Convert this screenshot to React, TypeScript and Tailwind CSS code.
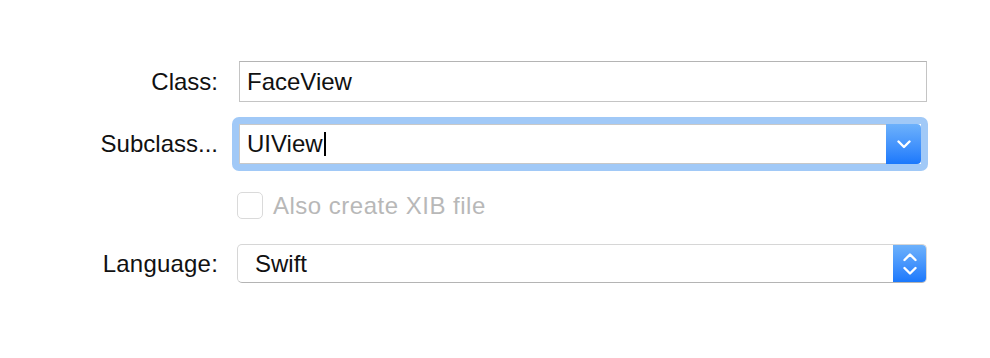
import React from 'react';

function ChevronDown() {
  return (
    <svg width="14" height="9" viewBox="0 0 14 9" fill="none">
      <path d="M1.5 1.5 L7 7 L12.5 1.5" stroke="white" strokeWidth="2.4" strokeLinecap="round" strokeLinejoin="round" />
    </svg>
  );
}

function UpDown() {
  return (
    <svg width="14" height="24" viewBox="0 0 14 24" fill="none">
      <path d="M1.5 8 L7 2.5 L12.5 8" stroke="white" strokeWidth="2.4" strokeLinecap="round" strokeLinejoin="round" />
      <path d="M1.5 16 L7 21.5 L12.5 16" stroke="white" strokeWidth="2.4" strokeLinecap="round" strokeLinejoin="round" />
    </svg>
  );
}

export default function App() {
  return (
    <div className="w-[990px] h-[358px] bg-white pt-[61px] font-['Liberation_Sans',Arial,sans-serif] text-[24px] text-[#111]">
      {/* Class */}
      <div className="flex items-center h-[41px]">
        <div className="w-[218px] text-right">Class:</div>
        <div className="ml-[21px] w-[688px] h-[41px] border border-[#c4c4c4] border-t-[#b4b4b4] flex items-center pl-[7px]">
          FaceView
        </div>
      </div>

      {/* Subclass */}
      <div className="mt-[15px] flex items-center h-[54px]">
        <div className="w-[218px] text-right">Subclass...</div>
        <div className="ml-[14px] w-[696px] h-[54px] rounded-[7px] bg-[#a1c9f7] p-[7px]">
          <div className="flex h-full bg-white">
            <div className="flex-1 flex items-center pl-[7px] border-y border-l border-[#c8c8c8]">
              <span>UIView</span>
              <span className="ml-[1px] inline-block w-[2px] h-[24px] bg-black" />
            </div>
            <div className="w-[35px] flex items-center justify-center rounded-r-[4px] bg-gradient-to-b from-[#6db1fb] to-[#1a78fc]">
              <ChevronDown />
            </div>
          </div>
        </div>
      </div>

      {/* Checkbox */}
      <div className="mt-[21px] flex items-center h-[27px]">
        <div className="ml-[237px] w-[26px] h-[27px] rounded-[5px] border border-[#dadada] bg-white" />
        <div className="ml-[10px] text-[#b8b8b8] tracking-[0.5px]">Also create XIB file</div>
      </div>

      {/* Language */}
      <div className="mt-[25px] flex items-center h-[39px]">
        <div className="w-[218px] text-right tracking-[0.2px]">Language:</div>
        <div className="ml-[19px] w-[690px] h-[39px] flex rounded-[5px] border border-[#d6d6d6] border-b-[#b4b4b4] bg-white overflow-hidden">
          <div className="flex-1 flex items-center pl-[17px]">Swift</div>
          <div className="w-[33px] flex items-center justify-center bg-gradient-to-b from-[#6db1fb] to-[#1a78fc]">
            <UpDown />
          </div>
        </div>
      </div>
    </div>
  );
}
